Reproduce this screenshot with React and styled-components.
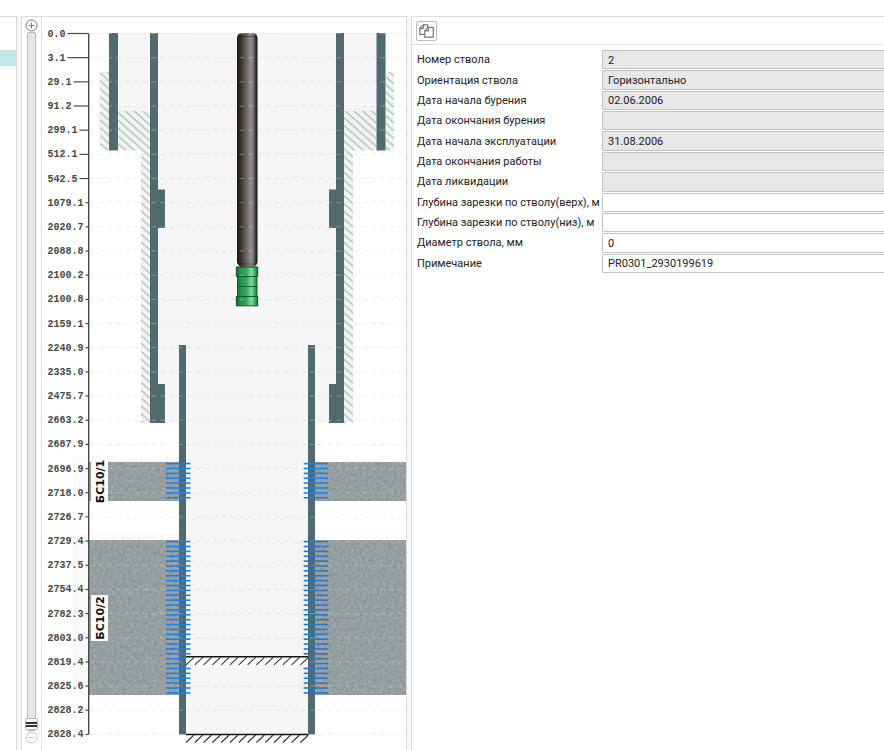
import { useState } from 'react';
import styled, { createGlobalStyle } from 'styled-components';

const GlobalStyle = createGlobalStyle`
  * {
    box-sizing: border-box;
  }

  body {
    margin: 0;
    background: #fff;
    color: #222;
    font-family: Roboto, 'Liberation Sans', sans-serif;
    font-size: 11px;
  }
`;

const Page = styled.div`
  display: flex;
  gap: 4px;
  min-height: 100vh;
  padding-top: 16px;
  background: linear-gradient(#fff 16px, #f7f7f7 16px);
`;

const Panel = styled.section`
  background: #fff;
  border: 1px solid #dcdcdc;
`;

const TreePanel = styled(Panel)`
  flex: 0 0 17px;
  padding-top: 33px;
  border-left: 0;
  border-bottom: 0;
`;

const SelectedRow = styled.div`
  height: 16px;
  background: #c5e6e7;
`;

const WellPanel = styled(Panel)`
  display: flex;
  flex: 0 0 386px;
  border-bottom: 0;
`;

const ZoomColumn = styled.div`
  display: flex;
  flex-direction: column;
  align-items: center;
  width: 20px;
  padding: 2px 0 6px;
  border-right: 1px solid #e2e2e2;
`;

const ZoomButton = styled.button`
  display: flex;
  padding: 0;
  border: 0;
  background: none;
  color: ${({ $muted }) => ($muted ? '#c4c4c4' : '#777')};
  cursor: pointer;
`;

const ZoomRange = styled.input`
  appearance: none;
  writing-mode: vertical-lr;
  flex: 1;
  width: 13px;
  min-height: 0;
  margin: 0;
  background: none;

  &::-webkit-slider-runnable-track {
    width: 9px;
    height: 100%;
    background: #e6e6e6;
    border: 1px solid #b9b9b9;
    border-radius: 2px;
  }

  &::-webkit-slider-thumb {
    appearance: none;
    width: 13px;
    height: 12px;
    margin-left: -3px;
    border: 1px solid #b5b5b5;
    border-radius: 2px;
    background: linear-gradient(
      #fff 3px, #333 3px, #333 5px, #fff 5px, #fff 6px, #333 6px, #333 8px, #fff 8px
    );
  }
`;

const WellDrawing = styled.svg`
  display: block;
  flex: 1;
  min-width: 0;
  align-self: flex-start;
`;

const DepthText = styled.text`
  font: bold 10px 'Liberation Mono', monospace;
  fill: #484848;
`;

const LayerText = styled.text`
  font: bold 11px 'DejaVu Sans', sans-serif;
  fill: #111;
`;

const InfoPanel = styled(Panel)`
  flex: 1;
  min-width: 0;
  border-right: 0;
  border-bottom: 0;
`;

const Toolbar = styled.div`
  display: flex;
  padding: 4px;
  height: 28px;
  border-bottom: 1px solid #dfdfdf;
`;

const ToolButton = styled.button`
  display: flex;
  align-items: center;
  justify-content: center;
  width: 21px;
  height: 20px;
  padding: 0;
  border: 1px solid #bdbdbd;
  border-radius: 2px;
  background: #fff;
  color: #777;
  cursor: pointer;
`;

const Fields = styled.form`
  display: grid;
  grid-template-columns: 185px 1fr;
  grid-auto-rows: 1fr;
  row-gap: 1px;
  align-items: stretch;
  height: 223px;
  margin-top: 5px;
  padding-left: 5px;
`;

const FieldLabel = styled.label`
  align-self: center;
  white-space: nowrap;
`;

const FieldInput = styled.input`
  width: 100%;
  min-width: 0;
  height: 100%;
  padding: 1px 5px 0;
  border: 1px solid #c2c2c2;
  border-right: 0;
  border-radius: 2px 0 0 2px;
  outline: none;
  background: ${({ readOnly }) => (readOnly ? '#e7e7e7' : '#fff')};
  color: #222;
  font: inherit;
`;

const depths = [
  '0.0', '3.1', '29.1', '91.2', '299.1', '512.1', '542.5', '1079.1', '2020.7', '2088.8',
  '2100.2', '2100.8', '2159.1', '2240.9', '2335.0', '2475.7', '2663.2', '2687.9', '2696.9',
  '2718.0', '2726.7', '2729.4', '2737.5', '2754.4', '2782.3', '2803.0', '2819.4', '2825.6',
  '2828.2', '2828.4',
];

const fields = [
  { id: 'number', label: 'Номер ствола', value: '2', readOnly: true },
  { id: 'orientation', label: 'Ориентация ствола', value: 'Горизонтально', readOnly: true },
  { id: 'drillStart', label: 'Дата начала бурения', value: '02.06.2006', readOnly: true },
  { id: 'drillEnd', label: 'Дата окончания бурения', value: '', readOnly: true },
  { id: 'workStart', label: 'Дата начала эксплуатации', value: '31.08.2006', readOnly: true },
  { id: 'workEnd', label: 'Дата окончания работы', value: '', readOnly: true },
  { id: 'liquidation', label: 'Дата ликвидации', value: '', readOnly: true },
  { id: 'cutTop', label: 'Глубина зарезки по стволу(верх), м', value: '' },
  { id: 'cutBottom', label: 'Глубина зарезки по стволу(низ), м', value: '' },
  { id: 'diameter', label: 'Диаметр ствола, мм', value: '0' },
  { id: 'note', label: 'Примечание', value: 'PR0301_2930199619' },
];

const TOP = 33.5;
const STEP = 24.17;
const PERF_STEP = 4.88;

// [x, y, width, height]
const casings = [
  [109, 33, 9, 117.5], [376.5, 33, 9, 117.5],
  [150, 33, 8, 390], [336, 33, 8, 390],
  [158, 189.5, 7, 38.5], [329, 189.5, 7, 38.5],
  [158, 384, 7, 39], [329, 384, 7, 39],
  [179, 345, 7, 389.5], [308, 345, 7, 389.5],
];

const cement = [
  [100, 72, 9, 78.5], [118, 111, 32, 39.5], [141, 150.5, 9, 272.5],
  [385.5, 72, 8.5, 78.5], [344, 111, 32.5, 39.5], [344, 150.5, 9, 272.5],
];

const Box = ({ box, ...rest }) => (
  <rect x={box[0]} y={box[1]} width={box[2]} height={box[3]} {...rest} />
);

const CircleIcon = ({ plus }) => (
  <svg width="13" height="13" viewBox="0 0 13 13" fill="none" stroke="currentColor">
    <circle cx="6.5" cy="6.5" r="5.5" />
    <path d={plus ? 'M3.5 6.5h6M6.5 3.5v6' : 'M3.5 6.5h6'} />
  </svg>
);

const CopyIcon = () => (
  <svg width="15" height="14" viewBox="0 0 15 14" fill="none" stroke="currentColor" strokeWidth="1.2" strokeLinejoin="round">
    <path d="M5.7 10.3H0.8V4.3L4.3 0.8H8.7V3.4" />
    <path d="M4.3 0.8V4.3H0.8" />
    <path d="M9.2 3.4H14.2V13.2H5.7V6.9Z" />
    <path d="M9.2 3.4V6.9H5.7" />
  </svg>
);

const Perforation = ({ x, y, count, color }) => (
  <g stroke={color} strokeWidth="1.6">
    {Array.from({ length: count }, (_, i) => (
      <path key={i} d={`M${x} ${y + i * PERF_STEP}h24.5`} />
    ))}
  </g>
);

const Plug = ({ y }) => (
  <g>
    <rect x="186" y={y} width="122" height="8" fill="#fff" />
    {Array.from({ length: 14 }, (_, i) => (
      <path key={i} d={`M${186 + i * 8.8} ${y + 8}l8 -7.5`} stroke="#333" strokeWidth="1.1" />
    ))}
    <path d={`M186 ${y}h122`} stroke="#111" strokeWidth="1.5" />
  </g>
);

const Layer = ({ y, height }) => (
  <g filter="url(#rock)">
    <rect x="89" y={y} width="90" height={height} fill="#959d9f" />
    <rect x="315" y={y} width="91" height={height} fill="#959d9f" />
  </g>
);

const LayerName = ({ y, height, textY, children }) => (
  <g>
    <rect x="91" y={y} width="17" height={height} fill="#fafafa" />
    <LayerText textAnchor="middle" transform={`translate(104 ${textY}) rotate(-90)`}>
      {children}
    </LayerText>
  </g>
);

const Pump = () => (
  <g>
    <path d="M237 38Q237.5 33 242 33H252.5Q257 33 257.5 38V263L254.5 267H240L237 263Z" fill="url(#tube)" />
    <path d="M238 36.5H257" stroke="#000" strokeOpacity="0.35" />
    <path d="M238 264H257" stroke="#000" strokeOpacity="0.35" />
    <rect x="237" y="276" width="20.5" height="21" fill="url(#green)" />
    <rect x="236" y="267" width="22" height="9.5" fill="url(#green)" />
    <rect x="236" y="296.5" width="22" height="9.5" fill="url(#green)" />
    <path
      d="M236 267H258M236 276.5H258M237 286.5H257.5M236 296.5H258M236 305.8H258"
      stroke="#0c4f2a"
      strokeWidth="0.9"
    />
    <path d="M236.3 267v9.5M257.8 267v9.5M236.3 296.5v9.5M257.8 296.5v9.5" stroke="#12572f" strokeWidth="0.7" />
  </g>
);

const WellScheme = () => (
  <WellDrawing viewBox="42 17 364 733" preserveAspectRatio="xMinYMin meet" role="img">
    <defs>
      <pattern id="cement" width="8.8" height="7.8" patternUnits="userSpaceOnUse">
        <rect width="8.8" height="7.8" fill="#eff6ef" />
        <path d="M-1 -0.886L9.8 8.686M-1 6.914L1 8.686M7.8 -0.886L9.8 0.886" stroke="#a9b1b5" strokeWidth="1.1" />
      </pattern>
      <linearGradient id="tube">
        <stop offset="0" stopColor="#1d160b" />
        <stop offset="0.15" stopColor="#352a1c" />
        <stop offset="0.5" stopColor="#716d6b" />
        <stop offset="0.65" stopColor="#8d8d8d" />
        <stop offset="0.8" stopColor="#777" />
        <stop offset="0.92" stopColor="#2e2a28" />
        <stop offset="1" stopColor="#151210" />
      </linearGradient>
      <linearGradient id="green">
        <stop offset="0" stopColor="#14632f" />
        <stop offset="0.2" stopColor="#249850" />
        <stop offset="0.45" stopColor="#35a35c" />
        <stop offset="0.7" stopColor="#7bdb9c" />
        <stop offset="0.88" stopColor="#35a35c" />
        <stop offset="1" stopColor="#125a2c" />
      </linearGradient>
      <filter id="rock" x="0" y="0" width="1" height="1" colorInterpolationFilters="sRGB">
        <feTurbulence type="fractalNoise" baseFrequency="0.35" numOctaves="3" seed="4" />
        <feColorMatrix values="0.14 0.06 0 0 0.485  0.14 0.06 0 0 0.52  0.14 0.06 0 0 0.53  0 0 0 0 1" />
        <feComposite in2="SourceGraphic" operator="in" />
      </filter>
    </defs>

    <rect x="118" y="33" width="258" height="78" fill="#f6f6f6" />
    <rect x="158" y="111" width="178" height="312" fill="#f6f6f6" />
    <rect x="186" y="423" width="122" height="311" fill="#f6f6f6" />
    <rect x="73" y="457" width="106" height="41" fill="#fafafa" />
    <rect x="73" y="534" width="106" height="158" fill="#f9f9f9" />
    <rect x="298" y="540" width="10" height="152" fill="#f1f4f1" />
    <rect x="304" y="462" width="4" height="38" fill="#eafaff" />
    <rect x="304" y="540" width="4" height="152" fill="#e2f6fb" />

    {cement.map((box) => <Box key={box.join()} box={box} fill="url(#cement)" />)}
    <Layer y={462} height={39} />
    <Layer y={540} height={155} />
    {casings.map((box) => <Box key={box.join()} box={box} fill="#516a70" />)}
    <Pump />

    <g stroke="#d4d4d4" strokeOpacity="0.42" strokeDasharray="4.6 4.2">
      {depths.map((depth, i) => (
        <path key={depth} d={`M90 ${TOP + i * STEP}H406`} />
      ))}
    </g>

    <Perforation x={166} y={463.6} count={8} color="#1b80e8" />
    <Perforation x={303.7} y={463.6} count={8} color="#1b80e8" />
    <Perforation x={166} y={541.6} count={32} color="#1b80e8" />
    <Perforation x={303.7} y={541.6} count={32} color="#2b77c0" />
    <Plug y={656.8} />
    <Plug y={734.5} />

    <path d={`M88.7 ${TOP}V${TOP + 29 * STEP}`} stroke="#4a4a4a" strokeWidth="1.4" />
    {depths.map((depth, i) => {
      const y = TOP + i * STEP;
      return (
        <g key={depth}>
          <DepthText x="47.5" y={y + 3}>{depth}</DepthText>
          <path d={`M${49.5 + depth.length * 6} ${y}H88.7`} stroke="#4a4a4a" strokeWidth="1.2" />
        </g>
      );
    })}

    <LayerName y={462} height={39} textY={481.5}>БС10/1</LayerName>
    <LayerName y={595} height={46} textY={618}>БС10/2</LayerName>
  </WellDrawing>
);

const App = () => {
  const [zoom, setZoom] = useState(100);
  const [values, setValues] = useState(
    Object.fromEntries(fields.map((field) => [field.id, field.value]))
  );

  const handleChange = (id, value) => {
    setValues((prev) => ({ ...prev, [id]: value }));
  };

  return (
    <>
      <GlobalStyle />
      <Page>
        <TreePanel>
          <SelectedRow />
        </TreePanel>
        <WellPanel>
          <ZoomColumn>
            <ZoomButton type="button" aria-label="Увеличить" onClick={() => setZoom(Math.max(0, zoom - 10))}>
              <CircleIcon plus />
            </ZoomButton>
            <ZoomRange
              type="range"
              aria-label="Масштаб"
              min="0"
              max="100"
              value={zoom}
              onChange={(e) => setZoom(Number(e.target.value))}
            />
            <ZoomButton type="button" aria-label="Уменьшить" $muted onClick={() => setZoom(Math.min(100, zoom + 10))}>
              <CircleIcon />
            </ZoomButton>
          </ZoomColumn>
          <WellScheme />
        </WellPanel>
        <InfoPanel>
          <Toolbar>
            <ToolButton type="button" aria-label="Копировать">
              <CopyIcon />
            </ToolButton>
          </Toolbar>
          <Fields>
            {fields.map(({ id, label, readOnly }) => [
              <FieldLabel key={`${id}-label`} htmlFor={id}>{label}</FieldLabel>,
              <FieldInput
                key={id}
                id={id}
                type="text"
                readOnly={readOnly}
                value={values[id]}
                onChange={(e) => handleChange(id, e.target.value)}
              />,
            ])}
          </Fields>
        </InfoPanel>
      </Page>
    </>
  );
};

export default App;
